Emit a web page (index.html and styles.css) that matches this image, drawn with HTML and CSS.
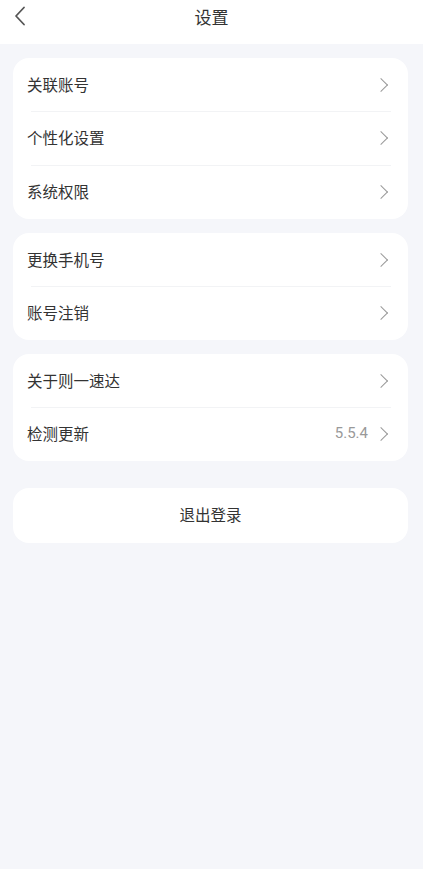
FILE: index.html
```html
<!DOCTYPE html>
<html lang="zh-CN">
<head>
    <meta charset="UTF-8">
    <meta name="viewport" content="width=device-width, initial-scale=1.0">
    <title>设置</title>
    <link rel="stylesheet" href="styles.css">
</head>
<body>

<div class="header">
    <span class="back">
        <svg width="12" height="20" viewBox="0 0 12 20"><path d="M10 1.5 L2 10 L10 18.5" fill="none" stroke="#555" stroke-width="1.8" stroke-linecap="round" stroke-linejoin="round"/></svg>
    </span>
    <h1 class="title">设置</h1>
</div>

<div class="page">
    <div class="card">
        <div class="row"><span class="label">关联账号</span><span class="arrow"></span></div>
        <div class="row"><span class="label">个性化设置</span><span class="arrow"></span></div>
        <div class="row"><span class="label">系统权限</span><span class="arrow"></span></div>
    </div>

    <div class="card">
        <div class="row"><span class="label">更换手机号</span><span class="arrow"></span></div>
        <div class="row"><span class="label">账号注销</span><span class="arrow"></span></div>
    </div>

    <div class="card">
        <div class="row"><span class="label">关于则一速达</span><span class="arrow"></span></div>
        <div class="row"><span class="label">检测更新</span><span class="value">5.5.4</span><span class="arrow"></span></div>
    </div>

    <div class="logout"><span class="logout-text">退出登录</span></div>
</div>

</body>
</html>
```

FILE: styles.css
```css
html, body {
    margin: 0;
    padding: 0;
}

body {
    font-family: "Noto Sans CJK SC", "Noto Sans", sans-serif;
    background-color: #f5f6fa;
    color: #333;
    min-height: 869px;
}

.header {
    height: 44px;
    background-color: #fff;
    display: flex;
    align-items: center;
    justify-content: center;
    position: relative;
}

.back {
    position: absolute;
    left: 14px;
    top: 6px;
    display: flex;
}

.title {
    margin: 0;
    font-size: 17px;
    font-weight: 400;
    color: #333;
    line-height: 1;
    margin-top: -11px;
}

.page {
    padding: 14px 13px 0 13px;
    width: 395px;
}

.card {
    background-color: #fff;
    border-radius: 16px;
    margin-bottom: 14px;
}

.row {
    height: 54px;
    display: flex;
    align-items: center;
    padding: 0 19px 0 14px;
    position: relative;
}

.row + .row::before {
    content: "";
    position: absolute;
    left: 18px;
    right: 17px;
    top: 0;
    border-top: 1px solid #f2f3f5;
}

.card .row:first-child {
    height: 53px;
}

.label {
    flex: 1;
    font-size: 15.5px;
    color: #333;
    margin-top: -2px;
}

.value {
    font-size: 15px;
    color: #999;
    margin-right: 8px;
    margin-top: -2px;
    font-family: Roboto, sans-serif;
    font-weight: 400;
}

.arrow {
    width: 9px;
    height: 9px;
    border-top: 1.5px solid #999;
    border-right: 1.5px solid #999;
    transform: rotate(45deg);
    margin-right: 3px;
}

.logout {
    margin-top: 27px;
    height: 55px;
    background-color: #fff;
    border-radius: 16px;
    display: flex;
    align-items: center;
    justify-content: center;
}

.logout-text {
    font-size: 15.5px;
    color: #333;
    margin-top: -3px;
}
```
